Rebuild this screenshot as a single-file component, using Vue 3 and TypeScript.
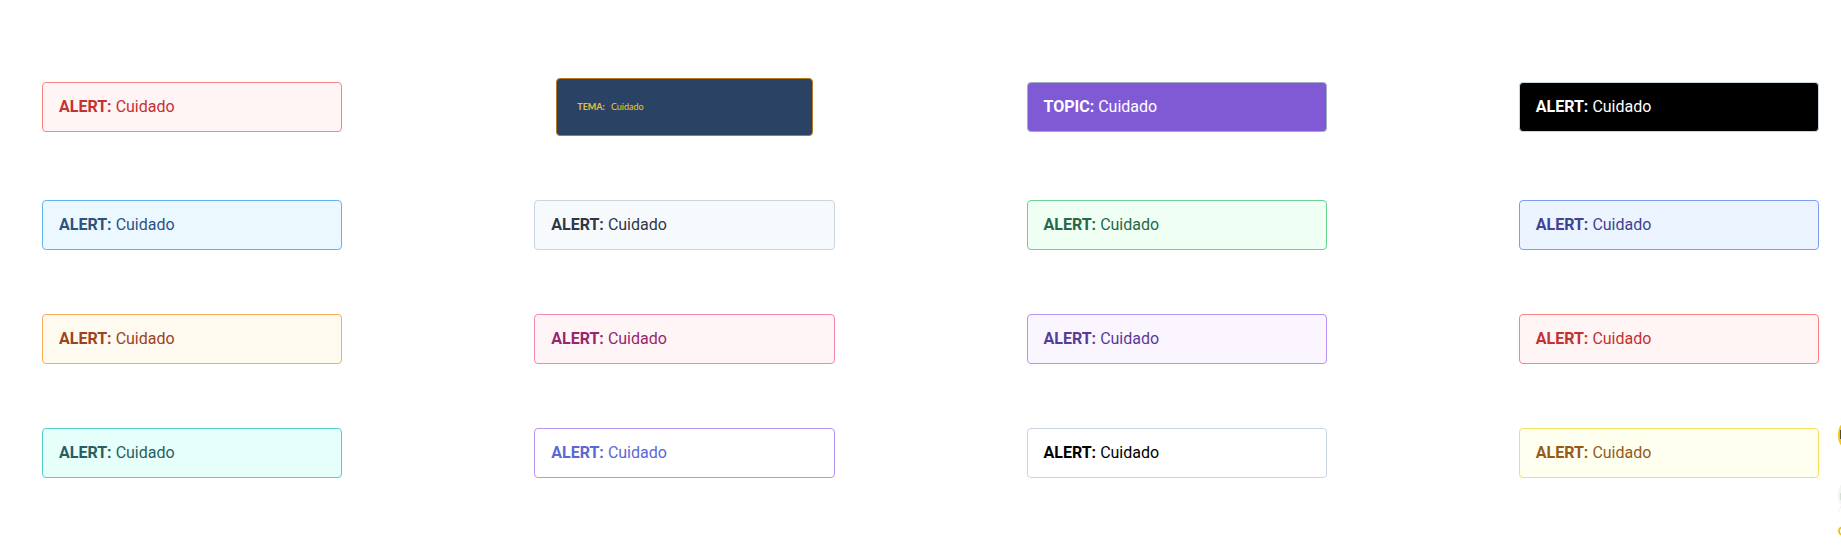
<script setup lang="ts">
interface Notice {
  tone: string
  label: string
  text: string
}

const alert = (tone: string, label = 'ALERT:'): Notice => ({ tone, label, text: 'Cuidado' })

const notices: Notice[] = [
  alert('red'), alert('theme', 'TEMA:'), alert('topic', 'TOPIC:'), alert('black'),
  alert('blue'), alert('gray'), alert('green'), alert('indigo'),
  alert('orange'), alert('pink'), alert('purple'), alert('red'),
  alert('teal'), alert('outline'), alert('white'), alert('yellow'),
]
</script>

<template>
  <main class="board">
    <div v-for="(n, i) in notices" :key="i" class="notice" :class="n.tone" role="alert">
      <strong class="label">{{ n.label }}</strong>
      <span>{{ n.text }}</span>
    </div>
  </main>
  <svg class="edge" width="12" height="122" viewBox="0 0 12 122" aria-hidden="true">
    <ellipse cx="21" cy="15" rx="12" ry="16" fill="#f5c211" />
    <path d="M11 10h1v9h-1z" fill="#5a4a30" />
    <path d="M12 64q-3 5-3 11t3 10z" fill="#f1f3f1" />
    <path d="M11 73h1v7h-1z" fill="#d3e2d3" />
    <path d="M12 86L9 93" fill="none" stroke="#f1f1f1" />
    <circle cx="14" cy="111" r="4" fill="none" stroke="#f5bf14" stroke-width="2" />
  </svg>
</template>

<style>
body {
  margin: 0;
  background: #fff;
  overflow-x: hidden;
}
</style>

<style scoped>
.board {
  display: grid;
  grid-template-columns: repeat(4, minmax(0, 1fr));
  align-items: center;
  gap: 64px 192px;
  padding: 78px 22px 72px 42px;
  font: 400 16px/24px Roboto, "Liberation Sans", sans-serif;
}
.notice {
  display: flex;
  gap: 4px;
  padding: 12px 16px;
  border: 1px solid;
  border-radius: 4px;
}
.label { font-weight: 700; }

.red { background: #fff5f5; border-color: #fc8181; color: #c53030; }
.blue { background: #ebf8ff; border-color: #63b3ed; color: #2c5282; }
.gray { background: #f7fafc; border-color: #cbd5e0; color: #2d3748; }
.green { background: #f0fff4; border-color: #68d391; color: #276749; }
.indigo { background: #ebf4ff; border-color: #7f9cf5; color: #434190; }
.orange { background: #fffaf0; border-color: #f6ad55; color: #9c4221; }
.pink { background: #fff5f7; border-color: #f687b3; color: #97266d; }
.purple { background: #faf5ff; border-color: #b794f4; color: #553c9a; }
.teal { background: #e6fffa; border-color: #4fd1c5; color: #285e61; }
.outline { background: #fff; border-color: #b794f4; color: #5a67d8; }
.white { background: #fff; border-color: #cbd5e0; color: #000; }
.yellow { background: #fffff0; border-color: #f6e05e; color: #975a16; }
.black { background: #000; border-color: #cbd5e0; color: #fff; }
.topic { background: #805ad5; border-color: #a0aec0; color: #fff; }
.theme {
  gap: 6px;
  margin: 0 22px;
  padding: 16px 20px;
  background: #2a4365;
  border-color: #b7791f;
  color: #f6c90e;
  font-family: Lato, "Open Sans", sans-serif;
  font-size: 9px;
}
.theme .label { color: #ecc035; }

/* Floating badges peeking in from the right edge */
.edge {
  position: absolute;
  top: 420px;
  right: 0;
}
</style>
